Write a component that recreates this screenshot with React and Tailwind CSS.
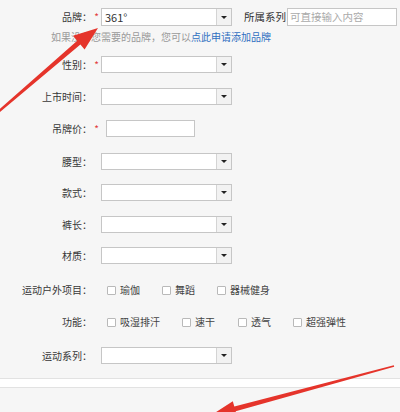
import React from 'react';

const font = "font-['Noto_Sans_CJK_SC','Noto_Sans',sans-serif]";

const Select = ({ value, className = 'w-[131px] h-[17px]' }) => (
  <div className={`flex bg-white border border-[#c6c6c6] ${className}`}>
    <div className="flex-1 flex items-center pl-[3px] text-[11px] leading-none text-[#333]">{value}</div>
    <div className="w-[15px] flex items-center justify-center bg-[#f2f2f2] border-l border-[#d4d4d4]">
      <span className="w-0 h-0 border-l-[3px] border-r-[3px] border-t-[3px] border-l-transparent border-r-transparent border-t-[#222]" />
    </div>
  </div>
);

const Label = ({ children }) => (
  <div className="w-[92px] text-right text-[10px] leading-none text-[#383838]">{children}</div>
);

const Star = ({ show }) => (
  <div className="w-[9px] text-center text-[10px] leading-none text-[#e23b3b]">{show ? '*' : ''}</div>
);

const Check = ({ label, width }) => (
  <div className={`flex items-center ${width}`}>
    <span className="w-[9px] h-[9px] border border-[#b9b9b9] rounded-[1px] bg-white" />
    <span className="ml-[4px] text-[10px] leading-none text-[#444]">{label}</span>
  </div>
);

const SelectRow = ({ label, star, mt }) => (
  <div className={`flex items-center h-[17px] ${mt}`}>
    <Label>{label}</Label>
    <Star show={star} />
    <Select />
  </div>
);

export default function App() {
  return (
    <div className={`relative w-[400px] h-[412px] overflow-hidden bg-[#f6f6f6] ${font}`}>
      <div className="pt-[8px]">
        {/* brand row */}
        <div className="flex items-center h-[18px]">
          <Label>品牌：</Label>
          <Star show />
          <Select value="361°" className="w-[131px] h-[18px]" />
          <div className="ml-[12px] w-[43px] text-[10.5px] leading-none text-[#333]">所属系列</div>
          <div className="w-[110px] h-[18px] bg-white border border-[#c6c6c6] flex items-center pl-[2px] text-[10.5px] leading-none text-[#aaa]">
            可直接输入内容
          </div>
        </div>
        <div className="mt-[4px] pl-[51px] text-[10px] leading-[14px] text-[#9a9a9a]">
          如果没有您需要的品牌，您可以<span className="text-[#2f6fc1]">点此申请添加品牌</span>
        </div>

        <SelectRow label="性别：" star mt="mt-[12px]" />
        <SelectRow label="上市时间：" mt="mt-[15px]" />

        <div className="flex items-center h-[17px] mt-[15px]">
          <Label>吊牌价：</Label>
          <Star show />
          <div className="ml-[5px] w-[89px] h-[17px] bg-white border border-[#c6c6c6]" />
        </div>

        <SelectRow label="腰型：" mt="mt-[16px]" />
        <SelectRow label="款式：" mt="mt-[14px]" />
        <SelectRow label="裤长：" mt="mt-[15px]" />
        <SelectRow label="材质：" mt="mt-[14px]" />

        <div className="flex items-center h-[16px] mt-[18px]">
          <Label>运动户外项目：</Label>
          <div className="w-[15px]" />
          <Check label="瑜伽" width="w-[55px]" />
          <Check label="舞蹈" width="w-[55px]" />
          <Check label="器械健身" width="w-[70px]" />
        </div>

        <div className="flex items-center h-[16px] mt-[16px]">
          <Label>功能：</Label>
          <div className="w-[15px]" />
          <Check label="吸湿排汗" width="w-[75px]" />
          <Check label="速干" width="w-[56px]" />
          <Check label="透气" width="w-[55px]" />
          <Check label="超强弹性" width="w-[70px]" />
        </div>

        <SelectRow label="运动系列：" mt="mt-[17px]" />

        <div className="mt-[14px] h-[10px] bg-white border-t border-b border-[#e2e2e2]" />
      </div>

      <svg className="absolute inset-0 pointer-events-none" width="400" height="412" viewBox="0 0 400 412">
        <polygon
          fill="#e5342b"
          points="-2.8,111.1 77.2,40.7 73,35.8 98,28 84.6,49.4 80.4,44.5 -1.2,112.9"
        />
        <polygon
          fill="#e5342b"
          points="393.8,365.2 234.3,406.5 232.8,401.2 210,416 237.2,416.6 235.7,411.3 394.2,366.8"
        />
      </svg>
    </div>
  );
}
